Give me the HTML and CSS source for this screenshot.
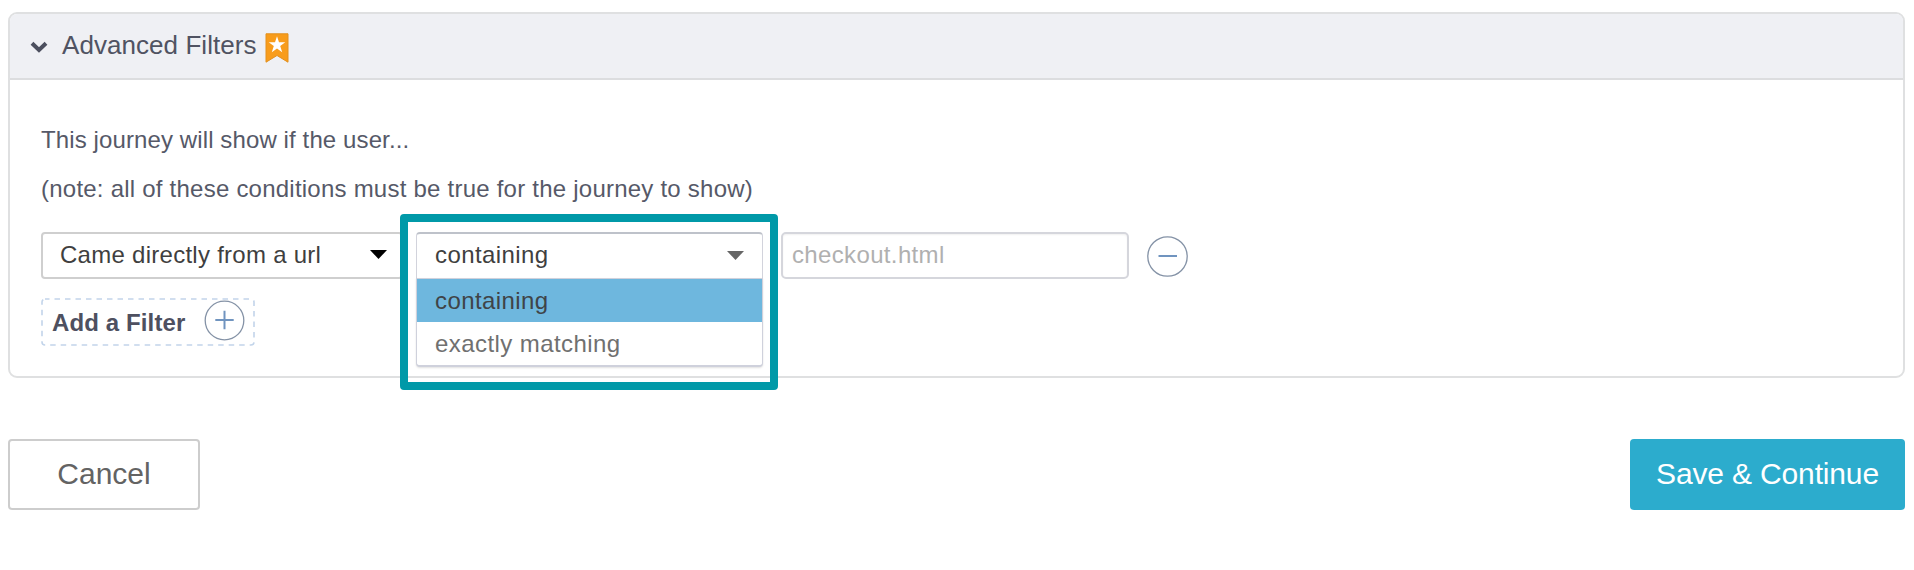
FILE: index.html
```html
<!DOCTYPE html>
<html lang="en">
<head>
<meta charset="utf-8">
<title>Advanced Filters</title>
<link rel="stylesheet" href="styles.css">
</head>
<body>
<main class="page">
  <section class="panel">
    <header class="panel-header">
      <svg class="chevron" width="18" height="13" viewBox="0 0 18 13"><path d="M2 2.3 L9 9 L16 2.3" fill="none" stroke="#4c4f5e" stroke-width="4"/></svg>
      <h2 class="panel-title">Advanced Filters</h2>
      <svg class="bookmark" width="24" height="31" viewBox="0 0 24 31"><path d="M1 .8H23V29.2L12 22.5L1 29.2Z" fill="#f89c1b" stroke="#e2901f" stroke-width="1"/><path d="M12 3.2L14 9.3H20.3L15.2 13L17.2 19.2L12 15.4L6.8 19.2L8.8 13L3.7 9.3H10Z" fill="#fff"/></svg>
    </header>
    <div class="panel-body">
      <p class="note">This journey will show if the user...</p>
      <p class="note conditions">(note: all of these conditions must be true for the journey to show)</p>
      <div class="filter-row">
        <div class="select source">
          <span>Came directly from a url</span>
          <svg width="17" height="9" viewBox="0 0 17 9"><path d="M0 0H17L8.5 9Z" fill="#000"/></svg>
        </div>
        <div class="match">
          <div class="select match-select">
            <span>containing</span>
            <svg width="17" height="9" viewBox="0 0 17 9"><path d="M0 0H17L8.5 9Z" fill="#666"/></svg>
          </div>
          <ul class="options">
            <li class="option selected">containing</li>
            <li class="option">exactly matching</li>
          </ul>
          <div class="highlight"></div>
        </div>
        <input class="url-input" type="text" placeholder="checkout.html">
        <svg class="remove" width="41" height="41" viewBox="0 0 41 41" fill="none"><circle cx="20.5" cy="20.5" r="19.7" stroke="#8492a6" stroke-width="1.3"/><path d="M11.5 20H30" stroke="#7094bf" stroke-width="2"/></svg>
      </div>
      <div class="add-filter">
        <svg class="dashes" width="214" height="48" viewBox="0 0 214 48"><rect x="1" y="1" width="212" height="46" rx="3" fill="none" stroke="#c2d4ea" stroke-width="1.6" stroke-dasharray="5.5 5" stroke-dashoffset="1"/></svg>
        <span>Add a Filter</span>
        <svg width="41" height="41" viewBox="0 0 41 41" fill="none"><circle cx="20.5" cy="20.5" r="19.3" stroke="#8492a6" stroke-width="1.3"/><path d="M11.3 20H29.7M20.5 10.8V29.2" stroke="#7094bf" stroke-width="2"/></svg>
      </div>
    </div>
  </section>
  <footer class="actions">
    <button class="button cancel">Cancel</button>
    <button class="button save">Save &amp; Continue</button>
  </footer>
</main>
</body>
</html>
```
FILE: styles.css
```css
* { box-sizing: border-box; }

body {
  margin: 0;
  background: #fff;
  font-family: "Liberation Sans", Arial, sans-serif;
  font-size: 24px;
  color: #565968;
}

svg { display: block; flex: none; }

.page { padding: 12px 9px 0 8px; }

.panel {
  height: 366px;
  border: 2px solid #dfe0e1;
  border-radius: 9px;
}

.panel-header {
  display: flex;
  align-items: flex-start;
  height: 66px;
  padding-left: 20px;
  border-bottom: 2px solid #dcdddf;
  border-radius: 7px 7px 0 0;
  background: #eff0f4;
}

.chevron { margin-top: 27px; }

.panel-title {
  margin: 0 8px 0 14px;
  font-size: 26px;
  font-weight: 400;
  line-height: 63px;
  letter-spacing: 0.06px;
  color: #505362;
}

.bookmark { margin-top: 19px; }

.panel-body { padding: 35px 31px 0; }

.note {
  margin: 0;
  line-height: 49px;
  letter-spacing: 0.11px;
}

.note.conditions { letter-spacing: 0.23px; }

.filter-row {
  display: flex;
  margin-top: 19px;
  height: 48px;
}

.select {
  display: flex;
  align-items: center;
  justify-content: space-between;
  height: 47px;
  background: #fff;
  color: #3f3f3f;
}

.source {
  width: 362px;
  padding: 0 14px 2px 17px;
  border: 2px solid #cfcfcf;
  border-radius: 4px;
}

.source span { letter-spacing: 0.27px; }

.match {
  position: relative;
  width: 347px;
  margin-left: 13px;
}

.match-select {
  padding: 0 18px 2px;
  border: 1px solid #d2d3dc;
  border-top: 2px solid #bec2ca;
  border-radius: 4px 4px 0 0;
}

.match-select span, .option { letter-spacing: 0.42px; }

.options {
  position: absolute;
  top: 46px;
  left: 0;
  width: 347px;
  height: 89px;
  margin: 0;
  padding: 0;
  list-style: none;
  background: #fff;
  border: 1px solid #cfd1dc;
  border-bottom-width: 2px;
  border-radius: 0 0 4px 4px;
  box-shadow: 0 1px 2px rgba(0, 0, 0, 0.12);
}

.option {
  height: 43px;
  padding-left: 18px;
  line-height: 43px;
  color: #707070;
}

.option.selected {
  background: #6eb7de;
  color: #3f4448;
}

.highlight {
  position: absolute;
  top: -18px;
  left: -16px;
  width: 378px;
  height: 176px;
  border: 8px solid #0099a8;
  border-radius: 4px;
}

.url-input {
  width: 348px;
  height: 47px;
  margin-left: 18px;
  padding: 0 9px 2px;
  border: 2px solid #d5d6dc;
  border-radius: 5px;
  box-shadow: inset 0 1px 2px rgba(0, 0, 0, 0.06);
  font: inherit;
  letter-spacing: 0.35px;
}

.url-input::placeholder { color: #b0b0b0; opacity: 1; }

.remove { margin: 4px 0 0 18px; }

.add-filter {
  position: relative;
  display: flex;
  justify-content: space-between;
  width: 214px;
  height: 48px;
  margin-top: 18px;
  padding: 2px 10px 0 11px;
  font-weight: 700;
  line-height: 45px;
  letter-spacing: 0.12px;
  color: #4e5060;
}

.dashes {
  position: absolute;
  top: 0;
  left: 0;
}

.actions {
  display: flex;
  justify-content: space-between;
  margin-top: 61px;
}

.button {
  height: 71px;
  padding: 0 0 1px;
  border-radius: 4px;
  font: inherit;
  font-size: 30px;
}

.cancel {
  width: 192px;
  border: 2px solid #cdcdcd;
  background: #fff;
  color: #636363;
}

.save {
  width: 275px;
  border: 0;
  background: #2caccd;
  color: #fff;
  letter-spacing: -0.15px;
}
```
